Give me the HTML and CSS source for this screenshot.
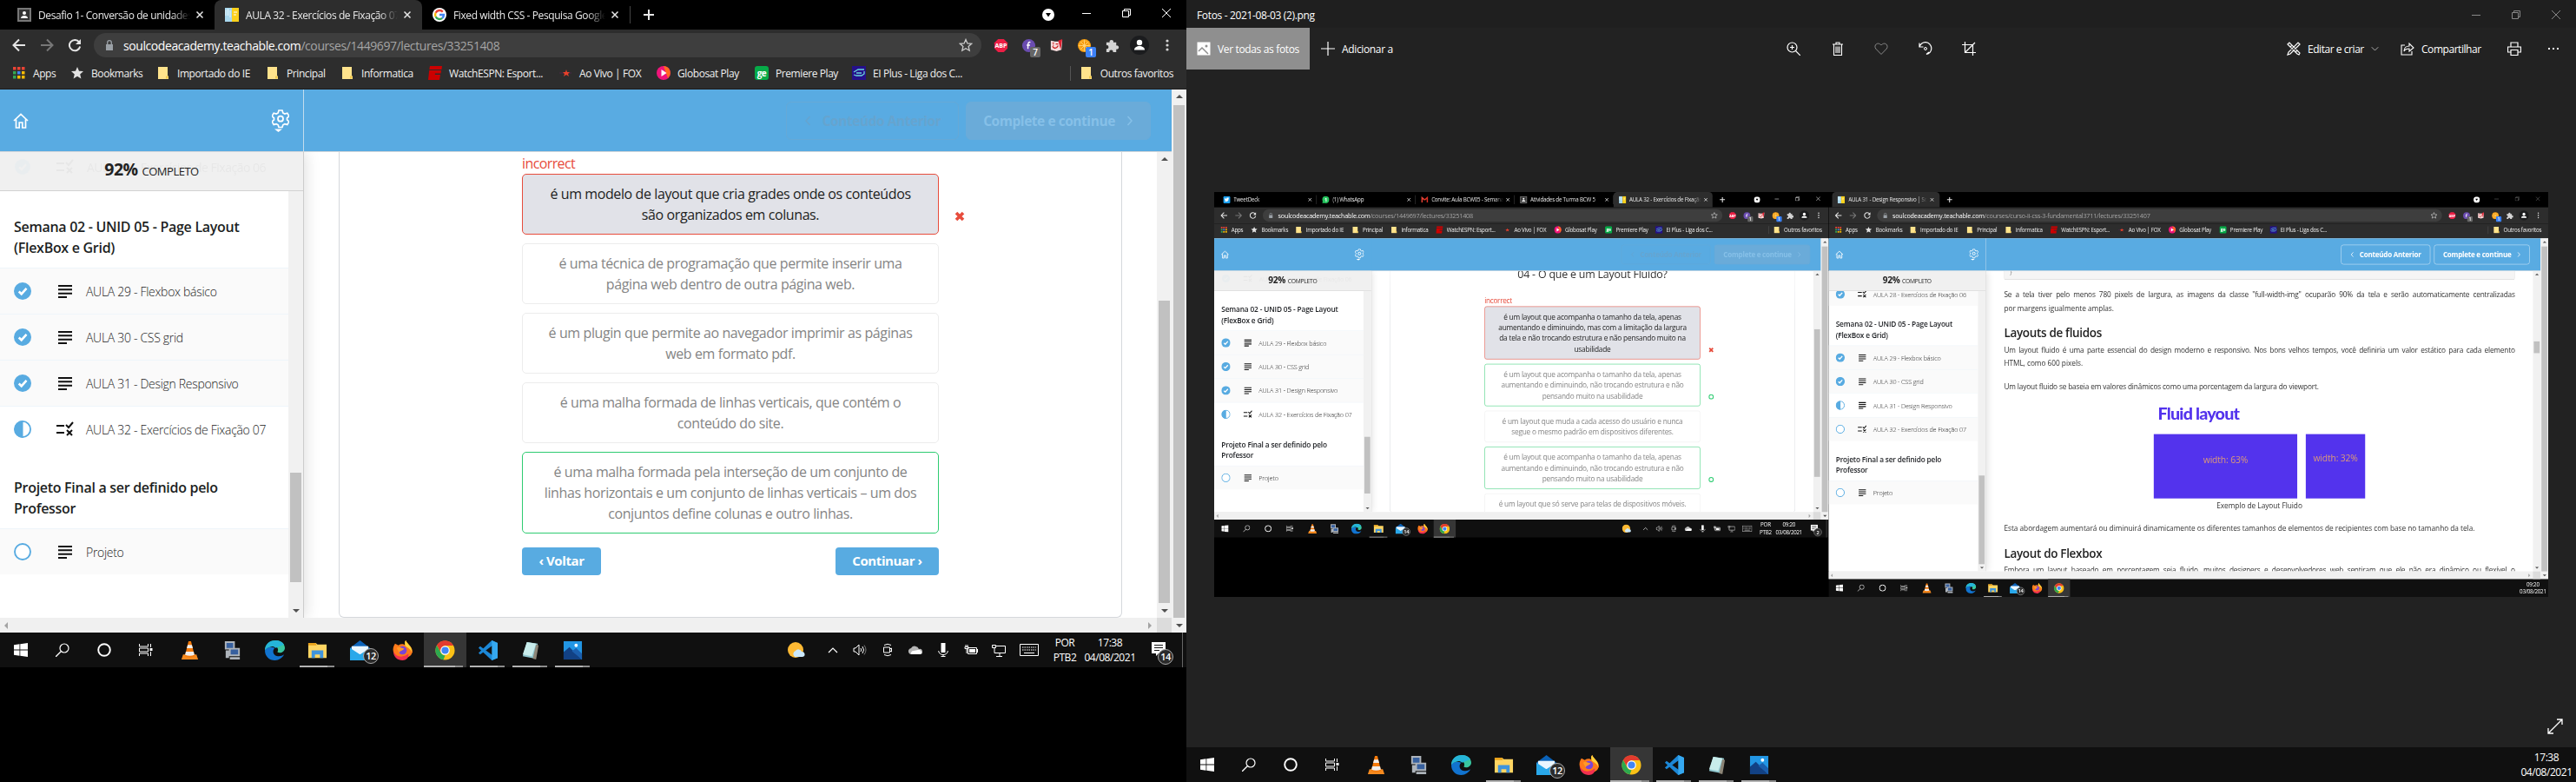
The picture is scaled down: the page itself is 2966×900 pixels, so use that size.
FILE: index.html
```html
<!DOCTYPE html>
<html lang="pt-BR">
<head>
<meta charset="utf-8">
<title>AULA 32 - Exercícios de Fixação 07</title>
<link rel="stylesheet" href="styles.css">
</head>
<body>
<svg class="defs" aria-hidden="true">
  <symbol id="x" viewBox="0 0 10 10"><path d="M1.5 1.5l7 7M8.5 1.5l-7 7" stroke="currentColor" stroke-width="1.5"/></symbol>
  <symbol id="xt" viewBox="0 0 10 10"><path d="M0 0l10 10M10 0L0 10" stroke="currentColor"/></symbol>
  <symbol id="min" viewBox="0 0 10 10"><path d="M0 5.5h10" stroke="currentColor"/></symbol>
  <symbol id="rest" viewBox="0 0 10 10"><path d="M.5 2.5h7v7h-7zM2.5 2.5v-2h7v7h-2" fill="none" stroke="currentColor"/></symbol>
  <symbol id="plus" viewBox="0 0 12 12"><path d="M6 0v12M0 6h12" stroke="currentColor" stroke-width="2"/></symbol>
  <symbol id="plust" viewBox="0 0 16 16"><path d="M8 0v16M0 8h16" stroke="currentColor" stroke-width="1.2"/></symbol>
  <symbol id="drop" viewBox="0 0 14 14"><circle cx="7" cy="7" r="7" fill="#fff"/><path d="M4 5h6L7 9.500z" fill="#000"/></symbol>
  <symbol id="person" viewBox="0 0 16 16"><path d="M1 1h14v14H1z" fill="#333" stroke="#777" stroke-width="2"/><circle cx="8" cy="6" r="2" fill="#fff"/><path d="M4 12c0-4 8-4 8 0z" fill="#fff"/></symbol>
  <symbol id="soul" viewBox="0 0 16 16"><path d="M0 0h8v16H0z" fill="#a9d8ee"/><path d="M8 0h8v16H8z" fill="#fcd11b"/><path d="M1 2v7M3.500 1v8M6 3v8" stroke="#eaf7fb"/><path d="M10 5h4M10 8h3" stroke="#fff"/></symbol>
  <symbol id="google" viewBox="0 0 16 16"><circle cx="8" cy="8" r="8" fill="#fff"/><g fill="none" stroke-width="2.400"><path d="M11.800 4.600A5 5 0 0 0 3.600 5.700" stroke="#ea4335"/><path d="M3.600 5.700a5 5 0 0 0 0 4.600" stroke="#fbbc05"/><path d="M3.600 10.300a5 5 0 0 0 7.600 1.500" stroke="#34a853"/><path d="M11.200 11.800A5 5 0 0 0 13 8H8" stroke="#4285f4"/></g></symbol>
  <symbol id="back" viewBox="0 0 16 16"><path d="M15 8H2M8 1.500L1.500 8 8 14.500" fill="none" stroke="currentColor" stroke-width="2"/></symbol>
  <symbol id="fwd" viewBox="0 0 16 16"><path d="M1 8h13M8 1.500L14.500 8 8 14.500" fill="none" stroke="currentColor" stroke-width="2"/></symbol>
  <symbol id="reload" viewBox="0 0 16 16"><path d="M13.200 4.500A6.200 6.200 0 1 0 14.200 9.500" fill="none" stroke="currentColor" stroke-width="2"/><path d="M15 1v6H9z" fill="currentColor"/></symbol>
  <symbol id="lock" viewBox="0 0 10 12"><path d="M1 5h8v7H1z" fill="#9aa0a6"/><path d="M2.700 5V3a2.300 2.300 0 0 1 4.600 0v2" fill="none" stroke="#9aa0a6" stroke-width="1.300"/></symbol>
  <symbol id="staro" viewBox="0 0 16 16"><path d="M8 1.500l1.900 4.400 4.800.4-3.600 3.200 1.100 4.700L8 11.700l-4.200 2.500 1.100-4.700L1.300 6.300l4.800-.4z" fill="none" stroke="#ccc" stroke-width="1.300"/></symbol>
  <symbol id="star" viewBox="0 0 16 16"><path d="M8 1l2 4.700 5 .4-3.800 3.300 1.200 5L8 11.700l-4.400 2.700 1.200-5L1 6.100l5-.4z" fill="#e3e3e3"/></symbol>
  <symbol id="abp" viewBox="0 0 18 18"><path d="M5.500 1h7L17 5.500v7L12.500 17h-7L1 12.500v-7z" fill="#ed1e45"/><text x="9" y="11.800" text-anchor="middle" font-size="7.500" font-weight="700" fill="#fff">ABP</text></symbol>
  <symbol id="fch" viewBox="0 0 18 18"><circle cx="9" cy="9" r="8" fill="#6a4cb0"/><path d="M11 5c-3-1-3 2-3 8M6.500 8.500h4" stroke="#fff" stroke-width="1.500" fill="none"/></symbol>
  <symbol id="cat" viewBox="0 0 18 18"><path d="M2 3l5 1 4 0 5-2-1 12-6 2-7-2z" fill="#f7dede"/><path d="M11 3l5-2-2 13" fill="#d23"/><path d="M4 6h2M8 7h3M4 10c2 3 5 3 7-1M5 8v1" stroke="#c22" stroke-width="1.400" fill="none"/></symbol>
  <symbol id="orange" viewBox="0 0 18 18"><circle cx="9" cy="9" r="8" fill="#f59a0c"/><path d="M9 2v14M2 9h14M4 4l10 10M14 4L4 14" stroke="#ffd37a"/><circle cx="9" cy="9" r="6" fill="none" stroke="#ffc24d"/></symbol>
  <symbol id="puzzle" viewBox="0 0 18 18"><path d="M2 5h4a2.300 2.300 0 1 1 4.500 0H14v4a2.300 2.300 0 1 1 0 4.300V17h-4a2.200 2.200 0 1 0-4.300 0H2v-4a2.200 2.200 0 1 0 0-4.300z" fill="#d5d5d5"/></symbol>
  <symbol id="avatar" viewBox="0 0 22 22"><circle cx="11" cy="11" r="11" fill="#1b1c1e"/><circle cx="11" cy="8" r="3.200" fill="#fff"/><path d="M5 16.500c0-6 12-6 12 0z" fill="#fff"/></symbol>
  <symbol id="dots" viewBox="0 0 4 16"><g fill="#d5d5d5"><circle cx="2" cy="3" r="1.600"/><circle cx="2" cy="8" r="1.600"/><circle cx="2" cy="13" r="1.600"/></g></symbol>
  <symbol id="apps" viewBox="0 0 16 16"><path d="M1 1h3.500v3.500H1zM6 1h3.500v3.500H6zM11 1h3.500v3.500H11z" fill="#ea4335"/><path d="M1 6h3.500v3.500H1z" fill="#34a853"/><path d="M6 6h3.500v3.500H6z" fill="#4285f4"/><path d="M11 6h3.500v3.500H11zM6 11h3.500v3.500H6zM11 11h3.500v3.500H11z" fill="#fbbc05"/><path d="M1 11h3.500v3.500H1z" fill="#34a853"/></symbol>
  <symbol id="folder" viewBox="0 0 16 16"><path d="M2 1h11v10l1 1v3H2z" fill="#ffe38c"/><path d="M11 14.500v-3h2.500v3z" fill="#f2c94c"/></symbol>
  <symbol id="espn" viewBox="0 0 16 16"><path d="M2 0h14l-.5 4H1.300zM1.200 5H15l-.5 3.500H8L7.800 10H14l-1 6H0z" fill="#c00"/></symbol>
  <symbol id="fox" viewBox="0 0 16 16"><path d="M1 7h14v2H1z" fill="#3c2a3a"/><path d="M9 4l1 3h3l-2 2 1 3-3-2-3 2 1-3-2-2h3z" fill="#e8402a"/></symbol>
  <symbol id="globo" viewBox="0 0 16 16"><circle cx="8" cy="8" r="8" fill="#f0147a"/><path d="M8 0a8 8 0 0 1 5 14z" fill="#ff6a1f"/><path d="M5.500 4v8l6-4z" fill="#fff"/></symbol>
  <symbol id="ge" viewBox="0 0 16 16"><rect width="16" height="16" rx="3" fill="#06aa48"/><text x="8" y="11.500" text-anchor="middle" font-size="10" font-weight="700" fill="#fff">ge</text></symbol>
  <symbol id="ei" viewBox="0 0 16 16"><path d="M0 0h16v16H0z" fill="#25108a"/><path d="M2 7l5-3h7M2 10l3 1h6l3-2V6M5 8h6" stroke="#67d3da" stroke-width="1.300" fill="none"/></symbol>
  <symbol id="home" viewBox="0 0 18 18"><path d="M1 9l8-7.500L17 9M3.500 7.500V17h3.700v-6h3.600v6h3.700V7.500" fill="none" stroke="#fff" stroke-width="1.700"/></symbol>
  <symbol id="gear" viewBox="0 0 20 26"><path d="M8 1h4l.8 3 2 1.100 3-.9 2 3.500-2.300 2.100v2l2.300 2.200-2 3.400-3-.8-2 1.100L12 20.500H8l-.8-2.800-2-1.100-3 .8-2-3.400 2.300-2.200v-2L.2 7.700l2-3.500 3 .9 2-1.100z" fill="none" stroke="#fff" stroke-width="1.700"/><circle cx="10" cy="10.700" r="3" fill="none" stroke="#fff" stroke-width="1.800"/><path d="M3 22.500h9L7.500 26z" fill="#fff"/></symbol>
  <symbol id="done" viewBox="0 0 20 20"><circle cx="10" cy="10" r="10" fill="#58abe1"/><path d="M5.700 10.500l3 2.800 5.800-6.500" fill="none" stroke="#fff" stroke-width="2.600"/></symbol>
  <symbol id="half" viewBox="0 0 20 20"><circle cx="10" cy="10" r="9.100" fill="#fff" stroke="#58abe1" stroke-width="1.800"/><path d="M10.500 0v20A10 10 0 0 1 10.500 0z" fill="#58abe1"/></symbol>
  <symbol id="todo" viewBox="0 0 20 20"><circle cx="10" cy="10" r="9" fill="#fff" stroke="#58abe1" stroke-width="1.900"/></symbol>
  <symbol id="lines" viewBox="0 0 20 18"><path d="M2 3h16M2 7.300h16M2 11.700h16M2 16h10" stroke="currentColor" stroke-width="2"/></symbol>
  <symbol id="quiz" viewBox="0 0 20 18"><path d="M0 5h9M0 13h9" stroke="currentColor" stroke-width="2"/><path d="M11 4l3 3 5-6M12 10l6 6M18 10l-6 6" stroke="currentColor" stroke-width="2" fill="none"/></symbol>
  <symbol id="cl" viewBox="0 0 8 12"><path d="M6.500 1L2 6l4.500 5" fill="none" stroke="currentColor" stroke-width="1.500"/></symbol>
  <symbol id="cr" viewBox="0 0 8 12"><path d="M1.500 1L6 6l-4.500 5" fill="none" stroke="currentColor" stroke-width="1.500"/></symbol>
  <symbol id="wrong" viewBox="0 0 12 12"><path d="M2 2l8 8M10 2l-8 8" stroke="#e74c3c" stroke-width="3.600"/></symbol>
  <symbol id="right" viewBox="0 0 14 14"><circle cx="7" cy="7" r="5.500" fill="none" stroke="#2ecc71" stroke-width="2.500"/></symbol>
  <symbol id="win" viewBox="0 0 16 16"><path d="M0 2.200l6.500-.9v6.300H0zM7.300 1.200L16 0v7.600H7.300zM0 8.400h6.500v6.300L0 13.800zM7.300 8.400H16V16l-8.700-1.200z" fill="#fff"/></symbol>
  <symbol id="search" viewBox="0 0 16 16"><circle cx="10" cy="6" r="5" fill="none" stroke="#fff" stroke-width="1.200"/><path d="M6.500 9.500L0 16" stroke="#fff" stroke-width="1.300"/></symbol>
  <symbol id="cort" viewBox="0 0 16 16"><circle cx="8" cy="8" r="6.800" fill="none" stroke="#fff" stroke-width="1.900"/></symbol>
  <symbol id="task" viewBox="0 0 16 16"><path d="M.5 1v3h10V1M.5 15v-3h10v3M.5 6h10v4H.5zM13.500 1v4M13.500 10v5" fill="none" stroke="#fff"/><path d="M12.500 6h3v3h-3z" fill="#fff"/></symbol>
  <symbol id="vlc" viewBox="0 0 24 24"><path d="M4 17h16l2 6H2z" fill="#f58a1f"/><path d="M10.500 1h3L18 19q-6 3-12 0z" fill="#f47a0b"/><path d="M9.500 5.500h5l1.200 4H8.400zM7.300 13.500h9.400l.9 4q-5.600 2-11.200 0z" fill="#eee"/></symbol>
  <symbol id="pc" viewBox="0 0 24 24"><path d="M3 1h12v10H3zM8 9h13v10H8zM4 12h4v9H4zM9 20h12v3H9z" fill="#aeb4bb"/><path d="M5 3h8v6H5zM10 11h9v6h-9z" fill="#37609f"/></symbol>
  <symbol id="edge" viewBox="0 0 24 24"><path d="M0 12C1 3 8 0 13 0c7 0 11 5 11 9 0 5-6 7-9 5 2-3 0-7-4-7-5 0-9 3-11 5z" fill="#38c6a0"/><path d="M13 0C5 0 0 5 0 12c3-5 10-6 13-3l10-4c-2-3-6-5-10-5z" fill="#25b5d8"/><path d="M0 12c0 7 5 12 12 12 5 0 9-3 11-7-4 3-12 3-13-3-.3-3 1-4 2-5C7 7 2 8 0 12z" fill="#1173cf"/></symbol>
  <symbol id="expl" viewBox="0 0 24 24"><path d="M1 3h9l2 2h11v16H1z" fill="#ffd562"/><path d="M1 3h9l1 3H1z" fill="#e9a21b"/><path d="M5 12h14v9h-4v-4H9v4H5z" fill="#3f94dc"/></symbol>
  <symbol id="mail" viewBox="0 0 24 24"><path d="M0 9l12-9 12 9v14H0z" fill="#0b62b8"/><path d="M2 7h20v10H2z" fill="#eaf6ff"/><path d="M0 9l12 8 12-8v15H0z" fill="#29a8ea"/></symbol>
  <symbol id="ff" viewBox="0 0 24 24"><path d="M3 4l4 2c3-2 6-2 8 0 0-3-1-4 1-6 1 4 8 7 8 14a12 11 0 0 1-23 0C0 10 1 7 3 4z" fill="#ff7a1a"/><path d="M1 13c3 8 12 8 18 3 1 5-3 8-7 8C6 24 1 20 1 13z" fill="#f2304f"/><path d="M16 0c1 4 8 7 7 14-2-5-6-5-8-8 0-3-1-4 1-6z" fill="#ffd43a"/><circle cx="12" cy="12" r="5" fill="#7a45d8"/><path d="M5 9c3-2 5 0 9 1-2 3-5 2-6 5z" fill="#ff9a26"/></symbol>
  <symbol id="chr" viewBox="0 0 24 24"><circle cx="12" cy="12" r="11.500" fill="#fbc116"/><path d="M2 6a11.500 11.500 0 0 1 20 .3H12a6 6 0 0 0-5 8z" fill="#e33b2e"/><path d="M2 6l5 9c1 2 3 3 5 3l-2 5.300A11.500 11.500 0 0 1 2 6z" fill="#2da94f"/><circle cx="12" cy="12" r="5.500" fill="#fff"/><circle cx="12" cy="12" r="4.300" fill="#4285f4"/></symbol>
  <symbol id="vsc" viewBox="0 0 24 24"><path d="M17 0l7 3v18l-7 3L1 9l2-2 15 11V6L3 17l-2-2z" fill="#1c87d6"/><path d="M17 0l7 3v18l-7 3z" fill="#35a8f0"/></symbol>
  <symbol id="note" viewBox="0 0 24 24"><path d="M8 2l13 2-3 18-15-3z" fill="#8fc7cf"/><path d="M8 2l11 2-5 15-11-2z" fill="#c8eceb"/><path d="M19 5l3 1-3 17-4-1z" fill="#8c8577"/></symbol>
  <symbol id="pho" viewBox="0 0 24 24"><path d="M1 1h22v22H1z" fill="#2296e4"/><path d="M1 14l7-6 15 15H1z" fill="#124184"/><path d="M11 13l5-4 7 7v7z" fill="#1b5fae"/><circle cx="16" cy="6" r="2" fill="#fff"/></symbol>
  <symbol id="sun" viewBox="0 0 20 20"><circle cx="9" cy="10" r="9" fill="#fdb933"/><path d="M8 18a4 4 0 0 1 1-7 4 4 0 0 1 7 1 3 3 0 0 1 1 6z" fill="#cbe8fb"/></symbol>
  <symbol id="up" viewBox="0 0 12 12"><path d="M1 9l5-5 5 5" fill="none" stroke="#fff" stroke-width="1.200"/></symbol>
  <symbol id="vol" viewBox="0 0 16 16"><path d="M1 6h2l4-4v12L3 10H1z" fill="none" stroke="#fff"/><path d="M9 6q1.500 2 0 4M11 4q3 4 0 8" fill="none" stroke="#fff"/><path d="M13 2.500q4 5.500 0 11" fill="none" stroke="#777"/></symbol>
  <symbol id="cam" viewBox="0 0 16 16"><path d="M4 2.500q4-2.500 8 0M4 13.500q4 2.500 8 0M3.500 5h7v6h-7zM10.500 7l2-1v4l-2-1" fill="none" stroke="#fff"/></symbol>
  <symbol id="cloud" viewBox="0 0 16 16"><path d="M1 12a3.500 3.500 0 0 1 2-6 5 5 0 0 1 9 1 3 3 0 0 1 2 6H2z" fill="#b5b5b5"/><path d="M3 13a3 3 0 0 1 3-4l5-1a3 3 0 0 1 3 5z" fill="#fff"/></symbol>
  <symbol id="mic" viewBox="0 0 12 16"><path d="M3.500 0h5v11h-5z" fill="#fff"/><path d="M.7 9c0 6 10.600 6 10.600 0M6 13v3M3.500 15.500h5" fill="none" stroke="#fff"/></symbol>
  <symbol id="bat" viewBox="0 0 16 16"><path d="M4.500 5.500h10v7h-10zM15.500 7v4M2 2v3M4 2v3M1 4.500h4v2H1zM3 6v6" fill="none" stroke="#fff"/><path d="M6 7h7v4H6z" fill="#fff"/></symbol>
  <symbol id="net" viewBox="0 0 16 16"><path d="M5 3.500h10.500v8H3V5M9 12v3M5 15.500h7M.5 2.500h4v3h-4z" fill="none" stroke="#fff"/></symbol>
  <symbol id="kbd" viewBox="0 0 22 14"><path d="M.5.5h21v13H.5z" fill="none" stroke="#fff"/><path d="M3 4h16M3 7h16" stroke="#fff" stroke-dasharray="1.500 1"/><path d="M5 10.500h12" stroke="#fff"/></symbol>
  <symbol id="msg" viewBox="0 0 16 16"><path d="M0 0h16v13H8l-3 3v-3H0z" fill="#fff"/><path d="M3 3.500h10M3 6.500h10M3 9.500h6" stroke="#111"/></symbol>
  <symbol id="tw" viewBox="0 0 16 16"><rect width="16" height="16" rx="3" fill="#1da1f2"/><path d="M3 11c4 3 9 1 9-5l1-2-3-.5c-2-.500-3 1-2.500 2.500C6 6 4 5 3.500 4 2.500 7 4 9 5 10z" fill="#fff"/></symbol>
  <symbol id="wa" viewBox="0 0 16 16"><circle cx="8" cy="8" r="8" fill="#25c35e"/><path d="M0 16l1.500-5 4 4z" fill="#25c35e"/><text x="8" y="12" text-anchor="middle" font-size="11" font-weight="700" fill="#fff">1</text></symbol>
  <symbol id="gm" viewBox="0 0 16 16"><path d="M2 14V3.500l6 5" fill="none" stroke="#ea4335" stroke-width="3"/><path d="M14 14V3.500l-6 5" fill="none" stroke="#d93025" stroke-width="3"/></symbol>
  <symbol id="pic" viewBox="0 0 16 16"><path d="M.5.5h15v15H.5z" fill="#fff"/><path d="M2 11l4-4 7 7" stroke="#8f8f8f" stroke-width="1.500" fill="none"/><circle cx="11" cy="5" r="1.500" fill="#8f8f8f"/></symbol>
  <symbol id="zoomi" viewBox="0 0 16 16"><circle cx="6.500" cy="6.500" r="5.500" fill="none" stroke="#fff" stroke-width="1.200"/><path d="M10.500 10.500L16 16M6.500 4v5M4 6.500h5" stroke="#fff" stroke-width="1.200"/></symbol>
  <symbol id="trash" viewBox="0 0 16 16"><path d="M2 3h12M6 3V1h4v2M3.500 3v12.500h9V3M6 5.500v7.500M8 5.500v7.500M10 5.500v7.500" fill="none" stroke="#fff" stroke-width="1.100"/></symbol>
  <symbol id="heart" viewBox="0 0 16 16"><path d="M8 14.500L1.700 8C-1 4 4-.500 8 4c4-4.500 9 0 6.300 4z" fill="none" stroke="#888"/></symbol>
  <symbol id="rot" viewBox="0 0 16 16"><path d="M1 6a7 7 0 1 1 8 8.500M1 1.500V6h4.500M12 12l-3 2.500" fill="none" stroke="#fff" stroke-width="1.200"/><circle cx="8" cy="8" r="1.500" fill="none" stroke="#fff"/></symbol>
  <symbol id="crop" viewBox="0 0 16 16"><path d="M3.500 0v12.500H16M0 3.500h12.500V16M4 12L15 1" fill="none" stroke="#fff" stroke-width="1.200"/></symbol>
  <symbol id="edit" viewBox="0 0 16 16"><path d="M1 3l2-2 12 12-1 2-2-1zM15 3l-2-2L2 12l-1 3 3-1zM4 6l2-2M10 12l2-2" fill="none" stroke="#fff" stroke-width="1.200"/></symbol>
  <symbol id="share" viewBox="0 0 16 16"><path d="M5 4H1v11h12v-4M4 11c0-4 3-6 6-6V2l5 5-5 4V8c-3 0-5 1-6 3z" fill="none" stroke="#fff" stroke-width="1.100"/></symbol>
  <symbol id="print" viewBox="0 0 16 16"><path d="M4 6V1h8v5M4 12H.5V6h15v6H12M4 9.500h8v6H4z" fill="none" stroke="#fff" stroke-width="1.200"/></symbol>
  <symbol id="expand" viewBox="0 0 18 18"><path d="M1 17L17 1M11 1h6v6M1 11v6h6" fill="none" stroke="#fff" stroke-width="1.300"/></symbol>
</svg>

<main class="desk">
  <section class="mon left">
    <div class="tabs">
      <div class="tab first"><svg><use href="#person"/></svg><span>Desafio 1- Conversão de unidades</span><svg class="tx"><use href="#x"/></svg></div>
      <div class="tab on"><svg><use href="#soul"/></svg><span>AULA 32 - Exercícios de Fixação 07</span><svg class="tx"><use href="#x"/></svg></div>
      <div class="tab sep"><svg><use href="#google"/></svg><span>Fixed width CSS - Pesquisa Google</span><svg class="tx"><use href="#x"/></svg></div>
      <svg class="new"><use href="#plus"/></svg>
      <div class="wc"><svg class="dd"><use href="#drop"/></svg><svg><use href="#min"/></svg><svg><use href="#rest"/></svg><svg><use href="#xt"/></svg></div>
    </div>
    <div class="bar">
      <svg><use href="#back"/></svg><svg class="dim"><use href="#fwd"/></svg><svg><use href="#reload"/></svg>
      <div class="omni"><svg class="lk"><use href="#lock"/></svg><span class="url"><b>soulcodeacademy.teachable.com</b>/courses/1449697/lectures/33251408</span><svg><use href="#staro"/></svg></div>
      <div class="ext"><i><svg><use href="#abp"/></svg></i><i><svg><use href="#fch"/></svg><em>7</em></i><i><svg><use href="#cat"/></svg></i><i><svg><use href="#orange"/></svg><em class="bl">1</em></i><i><svg><use href="#puzzle"/></svg></i><i><svg class="av"><use href="#avatar"/></svg></i><i><svg class="dt"><use href="#dots"/></svg></i></div>
    </div>
    <div class="marks"><p><svg><use href="#apps"/></svg>Apps</p><p><svg><use href="#star"/></svg>Bookmarks</p><p><svg><use href="#folder"/></svg>Importado do IE</p><p><svg><use href="#folder"/></svg>Principal</p><p><svg><use href="#folder"/></svg>Informatica</p><p><svg><use href="#espn"/></svg>WatchESPN: Esport...</p><p><svg><use href="#fox"/></svg>Ao Vivo | FOX</p><p><svg><use href="#globo"/></svg>Globosat Play</p><p><svg><use href="#ge"/></svg>Premiere Play</p><p><svg><use href="#ei"/></svg>EI Plus - Liga dos C...</p><p class="oth"><svg><use href="#folder"/></svg>Outros favoritos</p></div>
    <div class="page">
      <div class="view">
        <header class="top"><div class="tl"><svg class="hm"><use href="#home"/></svg><svg class="gr"><use href="#gear"/></svg></div><div class="tr off"><span class="b1"><svg><use href="#cl"/></svg>Conteúdo Anterior</span><span class="b2">Complete e continue<svg><use href="#cr"/></svg></span></div></header>
        <div class="cols">
          <aside class="side">
            <div class="prog"><div class="ghost"><svg><use href="#done"/></svg><svg><use href="#quiz"/></svg>AULA 28 - Exercícios de Fixação 06</div><span><b>92%</b> COMPLETO</span></div>
            <div class="sb"><div class="list">
              <h3>Semana 02 - UNID 05 - Page Layout (FlexBox e Grid)</h3>
              <div class="row"><svg class="st"><use href="#done"/></svg><svg class="ty"><use href="#lines"/></svg>AULA 29 - Flexbox básico</div>
              <div class="row"><svg class="st"><use href="#done"/></svg><svg class="ty"><use href="#lines"/></svg>AULA 30 - CSS grid</div>
              <div class="row"><svg class="st"><use href="#done"/></svg><svg class="ty"><use href="#lines"/></svg>AULA 31 - Design Responsivo</div>
              <div class="row cur"><svg class="st"><use href="#half"/></svg><svg class="ty"><use href="#quiz"/></svg>AULA 32 - Exercícios de Fixação 07</div>
              <h3>Projeto Final a ser definido pelo Professor</h3>
              <div class="row"><svg class="st"><use href="#todo"/></svg><svg class="ty"><use href="#lines"/></svg>Projeto</div>
            </div><div class="scr s-side"><i></i></div></div>
          </aside>
          <div class="body"><div class="card q-main"><div class="quiz">
            <div class="inc">incorrect</div>
            <div class="opt bad">é um modelo de layout que cria grades onde os conteúdos<br>são organizados em colunas.<svg><use href="#wrong"/></svg></div>
            <div class="opt">é uma técnica de programação que permite inserir uma<br>página web dentro de outra página web.</div>
            <div class="opt">é um plugin que permite ao navegador imprimir as páginas<br>web em formato pdf.</div>
            <div class="opt">é uma malha formada de linhas verticais, que contém o<br>conteúdo do site.</div>
            <div class="opt ok">é uma malha formada pela interseção de um conjunto de<br>linhas horizontais e um conjunto de linhas verticais – um dos<br>conjuntos define colunas e outro linhas.</div>
            <div class="nav"><span>‹ Voltar</span><span>Continuar ›</span></div>
          </div></div></div>
          <div class="scr s-q"><i></i></div>
        </div>
        <div class="hs"><i></i></div>
      </div>
      <div class="scr s-page"><i></i></div>
    </div>
    <div class="tbar">
      <i class="n"><svg class="s16"><use href="#win"/></svg></i><i class="n"><svg class="s16"><use href="#search"/></svg></i><i class="n"><svg class="s16"><use href="#cort"/></svg></i><i class="n"><svg class="s16"><use href="#task"/></svg></i><i class="g"></i><i><svg><use href="#vlc"/></svg></i><i><svg><use href="#pc"/></svg></i><i><svg><use href="#edge"/></svg></i><i class="run"><svg><use href="#expl"/></svg></i><i><svg><use href="#mail"/></svg><em>12</em></i><i><svg><use href="#ff"/></svg></i><i class="act"><svg><use href="#chr"/></svg></i><i class="run"><svg><use href="#vsc"/></svg></i><i class="run"><svg><use href="#note"/></svg></i><i class="run"><svg><use href="#pho"/></svg></i>
      <div class="tray"><svg class="s20"><use href="#sun"/></svg><svg class="s12"><use href="#up"/></svg><svg><use href="#vol"/></svg><svg><use href="#cam"/></svg><svg><use href="#cloud"/></svg><svg><use href="#mic"/></svg><svg><use href="#bat"/></svg><svg><use href="#net"/></svg><svg class="kb"><use href="#kbd"/></svg><span class="lang">POR<br>PTB2</span><span class="clk">17:38<br>04/08/2021</span><i class="nt"><svg><use href="#msg"/></svg><em>14</em></i></div>
    </div>
  </section>

  <section class="mon right app">
    <div class="atitle"><span>Fotos - 2021-08-03 (2).png</span><div class="awc"><svg><use href="#min"/></svg><svg><use href="#rest"/></svg><svg><use href="#xt"/></svg></div></div>
    <div class="atool">
      <span class="all"><svg><use href="#pic"/></svg>Ver todas as fotos</span><span class="add"><svg><use href="#plust"/></svg>Adicionar a</span>
      <div class="mid"><svg><use href="#zoomi"/></svg><svg><use href="#trash"/></svg><svg><use href="#heart"/></svg><svg><use href="#rot"/></svg><svg><use href="#crop"/></svg></div>
      <div class="end"><span class="e1"><svg><use href="#edit"/></svg>Editar e criar<svg class="dn"><use href="#up"/></svg></span><span class="e2"><svg><use href="#share"/></svg>Compartilhar</span><svg><use href="#print"/></svg><span class="more"><b></b><b></b><b></b></span></div>
    </div>
    <div class="stage">
      <div class="photo"><div class="desk shrink">
        <section class="mon left">
          <div class="tabs t5">
            <div class="tab first"><svg><use href="#tw"/></svg><span>TweetDeck</span><svg class="tx"><use href="#x"/></svg></div>
            <div class="tab"><svg><use href="#wa"/></svg><span>(1) WhatsApp</span><svg class="tx"><use href="#x"/></svg></div>
            <div class="tab"><svg><use href="#gm"/></svg><span>Convite: Aula BCW05 - Semana 02</span><svg class="tx"><use href="#x"/></svg></div>
            <div class="tab"><svg><use href="#person"/></svg><span>Atividades de Turma BCW 5</span><svg class="tx"><use href="#x"/></svg></div>
            <div class="tab on"><svg><use href="#soul"/></svg><span>AULA 32 - Exercícios de Fixação</span><svg class="tx"><use href="#x"/></svg></div>
            <svg class="new"><use href="#plus"/></svg>
            <div class="wc"><svg class="dd"><use href="#drop"/></svg><svg><use href="#min"/></svg><svg><use href="#rest"/></svg><svg><use href="#xt"/></svg></div>
          </div>
          <div class="bar">
            <svg><use href="#back"/></svg><svg class="dim"><use href="#fwd"/></svg><svg><use href="#reload"/></svg>
            <div class="omni"><svg class="lk"><use href="#lock"/></svg><span class="url"><b>soulcodeacademy.teachable.com</b>/courses/1449697/lectures/33251408</span><svg><use href="#staro"/></svg></div>
            <div class="ext"><i><svg><use href="#abp"/></svg></i><i><svg><use href="#fch"/></svg><em>1</em></i><i><svg><use href="#cat"/></svg></i><i><svg><use href="#orange"/></svg><em class="bl">1</em></i><i><svg><use href="#puzzle"/></svg></i><i><svg class="av"><use href="#avatar"/></svg></i><i><svg class="dt"><use href="#dots"/></svg></i></div>
          </div>
          <div class="marks"><p><svg><use href="#apps"/></svg>Apps</p><p><svg><use href="#star"/></svg>Bookmarks</p><p><svg><use href="#folder"/></svg>Importado do IE</p><p><svg><use href="#folder"/></svg>Principal</p><p><svg><use href="#folder"/></svg>Informatica</p><p><svg><use href="#espn"/></svg>WatchESPN: Esport...</p><p><svg><use href="#fox"/></svg>Ao Vivo | FOX</p><p><svg><use href="#globo"/></svg>Globosat Play</p><p><svg><use href="#ge"/></svg>Premiere Play</p><p><svg><use href="#ei"/></svg>EI Plus - Liga dos C...</p><p class="oth"><svg><use href="#folder"/></svg>Outros favoritos</p></div>
          <div class="page">
            <div class="view">
              <header class="top"><div class="tl nl"><svg class="hm"><use href="#home"/></svg><svg class="gr"><use href="#gear"/></svg></div><div class="tr off"><span class="b1"><svg><use href="#cl"/></svg>Conteúdo Anterior</span><span class="b2">Complete e continue<svg><use href="#cr"/></svg></span></div></header>
              <div class="cols">
                <aside class="side">
                  <div class="prog"><div class="ghost"><svg><use href="#done"/></svg><svg><use href="#quiz"/></svg>AULA 28 - Exercícios de Fixação 06</div><span><b>92%</b> COMPLETO</span></div>
                  <div class="sb"><div class="list">
                    <h3>Semana 02 - UNID 05 - Page Layout (FlexBox e Grid)</h3>
                    <div class="row"><svg class="st"><use href="#done"/></svg><svg class="ty"><use href="#lines"/></svg>AULA 29 - Flexbox básico</div>
                    <div class="row"><svg class="st"><use href="#done"/></svg><svg class="ty"><use href="#lines"/></svg>AULA 30 - CSS grid</div>
                    <div class="row"><svg class="st"><use href="#done"/></svg><svg class="ty"><use href="#lines"/></svg>AULA 31 - Design Responsivo</div>
                    <div class="row cur"><svg class="st"><use href="#half"/></svg><svg class="ty"><use href="#quiz"/></svg>AULA 32 - Exercícios de Fixação 07</div>
                    <h3>Projeto Final a ser definido pelo Professor</h3>
                    <div class="row"><svg class="st"><use href="#todo"/></svg><svg class="ty"><use href="#lines"/></svg>Projeto</div>
                  </div><div class="scr s-side"><i></i></div></div>
                </aside>
                <div class="body"><div class="card q-in"><h2 class="qt">04 - O que é um Layout Fluido?</h2><div class="quiz">
                  <div class="inc">incorrect</div>
                  <div class="opt bad">é um layout que acompanha o tamanho da tela, apenas<br>aumentando e diminuindo, mas com a limitação da largura<br>da tela e não trocando estrutura e não pensando muito na<br>usabilidade<svg><use href="#wrong"/></svg></div>
                  <div class="opt ok">é um layout que acompanha o tamanho da tela, apenas<br>aumentando e diminuindo, não trocando estrutura e não<br>pensando muito na usabilidade<svg><use href="#right"/></svg></div>
                  <div class="opt">é um layout que muda a cada acesso do usuário e nunca<br>segue o mesmo padrão em dispositivos diferentes.</div>
                  <div class="opt ok">é um layout que acompanha o tamanho da tela, apenas<br>aumentando e diminuindo, não trocando estrutura e não<br>pensando muito na usabilidade<svg><use href="#right"/></svg></div>
                  <div class="opt">é um layout que só serve para telas de dispositivos móveis.</div>
                </div></div></div>
                <div class="scr s-q2"><i></i></div>
              </div>
              <div class="hs"><i></i></div>
            </div>
            <div class="scr s-page"><i></i></div>
          </div>
          <div class="tbar">
            <i class="n"><svg class="s16"><use href="#win"/></svg></i><i class="n"><svg class="s16"><use href="#search"/></svg></i><i class="n"><svg class="s16"><use href="#cort"/></svg></i><i class="n"><svg class="s16"><use href="#task"/></svg></i><i class="g"></i><i><svg><use href="#vlc"/></svg></i><i><svg><use href="#pc"/></svg></i><i><svg><use href="#edge"/></svg></i><i class="run"><svg><use href="#expl"/></svg></i><i><svg><use href="#mail"/></svg><em>14</em></i><i><svg><use href="#ff"/></svg></i><i class="act"><svg><use href="#chr"/></svg></i>
            <div class="tray"><svg class="s20"><use href="#sun"/></svg><svg class="s12"><use href="#up"/></svg><svg><use href="#vol"/></svg><svg><use href="#cam"/></svg><svg><use href="#cloud"/></svg><svg><use href="#mic"/></svg><svg><use href="#bat"/></svg><svg><use href="#net"/></svg><svg class="kb"><use href="#kbd"/></svg><span class="lang">POR<br>PTB2</span><span class="clk">09:20<br>03/08/2021</span><i class="nt"><svg><use href="#msg"/></svg><em>2</em></i></div>
          </div>
        </section>
        <section class="mon right">
          <div class="tabs">
            <div class="tab first on"><svg><use href="#soul"/></svg><span>AULA 31 - Design Responsivo | Soul</span><svg class="tx"><use href="#x"/></svg></div>
            <svg class="new"><use href="#plus"/></svg>
            <div class="wc faded"><svg class="dd"><use href="#drop"/></svg><svg><use href="#min"/></svg><svg><use href="#rest"/></svg><svg><use href="#xt"/></svg></div>
          </div>
          <div class="bar">
            <svg><use href="#back"/></svg><svg class="dim"><use href="#fwd"/></svg><svg><use href="#reload"/></svg>
            <div class="omni"><svg class="lk"><use href="#lock"/></svg><span class="url"><b>soulcodeacademy.teachable.com</b>/courses/curso-ii-css-3-fundamental3711/lectures/33251407</span><svg><use href="#staro"/></svg></div>
            <div class="ext"><i><svg><use href="#abp"/></svg></i><i><svg><use href="#fch"/></svg><em>1</em></i><i><svg><use href="#cat"/></svg></i><i><svg><use href="#orange"/></svg><em class="bl">1</em></i><i><svg><use href="#puzzle"/></svg></i><i><svg class="av"><use href="#avatar"/></svg></i><i><svg class="dt"><use href="#dots"/></svg></i></div>
          </div>
          <div class="marks"><p><svg><use href="#apps"/></svg>Apps</p><p><svg><use href="#star"/></svg>Bookmarks</p><p><svg><use href="#folder"/></svg>Importado do IE</p><p><svg><use href="#folder"/></svg>Principal</p><p><svg><use href="#folder"/></svg>Informatica</p><p><svg><use href="#espn"/></svg>WatchESPN: Esport...</p><p><svg><use href="#fox"/></svg>Ao Vivo | FOX</p><p><svg><use href="#globo"/></svg>Globosat Play</p><p><svg><use href="#ge"/></svg>Premiere Play</p><p><svg><use href="#ei"/></svg>EI Plus - Liga dos C...</p><p class="oth"><svg><use href="#folder"/></svg>Outros favoritos</p></div>
          <div class="page">
            <div class="view">
              <header class="top"><div class="tl"><svg class="hm"><use href="#home"/></svg><svg class="gr"><use href="#gear"/></svg></div><div class="tr"><span class="b1"><svg><use href="#cl"/></svg>Conteúdo Anterior</span><span class="b2">Complete e continue<svg><use href="#cr"/></svg></span></div></header>
              <div class="cols">
                <aside class="side">
                  <div class="prog"><span><b>92%</b> COMPLETO</span></div>
                  <div class="sb"><div class="list up">
                    <div class="row"><svg class="st"><use href="#done"/></svg><svg class="ty"><use href="#quiz"/></svg>AULA 28 - Exercícios de Fixação 06</div>
                    <h3>Semana 02 - UNID 05 - Page Layout (FlexBox e Grid)</h3>
                    <div class="row"><svg class="st"><use href="#done"/></svg><svg class="ty"><use href="#lines"/></svg>AULA 29 - Flexbox básico</div>
                    <div class="row"><svg class="st"><use href="#done"/></svg><svg class="ty"><use href="#lines"/></svg>AULA 30 - CSS grid</div>
                    <div class="row cur"><svg class="st"><use href="#half"/></svg><svg class="ty"><use href="#lines"/></svg>AULA 31 - Design Responsivo</div>
                    <div class="row"><svg class="st"><use href="#todo"/></svg><svg class="ty"><use href="#quiz"/></svg>AULA 32 - Exercícios de Fixação 07</div>
                    <h3>Projeto Final a ser definido pelo Professor</h3>
                    <div class="row"><svg class="st"><use href="#todo"/></svg><svg class="ty"><use href="#lines"/></svg>Projeto</div>
                  </div><div class="scr s-side2"><i></i></div></div>
                </aside>
                <article class="art">
                  <div class="code">}</div>
                  <p class="just">Se a tela tiver pelo menos 780 pixels de largura, as imagens da classe "full-width-img" ocuparão 90% da tela e serão automaticamente centralizadas</p><p>por margens igualmente amplas.</p>
                  <h2>Layouts de fluidos</h2>
                  <p class="just">Um layout fluido é uma parte essencial do design moderno e responsivo. Nos bons velhos tempos, você definiria um valor estático para cada elemento</p><p>HTML, como 600 pixels.</p>
                  <p class="gap">Um layout fluido se baseia em valores dinâmicos como uma porcentagem da largura do viewport.</p>
                  <figure><strong>Fluid layout</strong><div class="fl"><div>width: 63%</div><div>width: 32%</div></div><figcaption>Exemplo de Layout Fluido</figcaption></figure>
                  <p>Esta abordagem aumentará ou diminuirá dinamicamente os diferentes tamanhos de elementos de recipientes com base no tamanho da tela.</p>
                  <h2 class="h2b">Layout do Flexbox</h2>
                  <p class="just">Embora um layout baseado em porcentagem seja fluido, muitos designers e desenvolvedores web sentiram que ele não era dinâmico ou flexível o</p>
                </article>
                <div class="scr s-art"><i></i></div>
              </div>
              <div class="hs"><i></i></div>
            </div>
            <div class="scr s-page"><i></i></div>
          </div>
          <div class="tbar">
            <i class="n"><svg class="s16"><use href="#win"/></svg></i><i class="n"><svg class="s16"><use href="#search"/></svg></i><i class="n"><svg class="s16"><use href="#cort"/></svg></i><i class="n"><svg class="s16"><use href="#task"/></svg></i><i class="g"></i><i><svg><use href="#vlc"/></svg></i><i><svg><use href="#pc"/></svg></i><i><svg><use href="#edge"/></svg></i><i class="run"><svg><use href="#expl"/></svg></i><i><svg><use href="#mail"/></svg><em>14</em></i><i><svg><use href="#ff"/></svg></i><i class="act"><svg><use href="#chr"/></svg></i>
            <div class="tray solo"><span class="clk">09:20<br>03/08/2021</span></div>
          </div>
        </section>
      </div></div>
      <svg class="exp"><use href="#expand"/></svg>
    </div>
    <div class="tbar">
      <i class="n"><svg class="s16"><use href="#win"/></svg></i><i class="n"><svg class="s16"><use href="#search"/></svg></i><i class="n"><svg class="s16"><use href="#cort"/></svg></i><i class="n"><svg class="s16"><use href="#task"/></svg></i><i class="g"></i><i><svg><use href="#vlc"/></svg></i><i><svg><use href="#pc"/></svg></i><i><svg><use href="#edge"/></svg></i><i class="run"><svg><use href="#expl"/></svg></i><i><svg><use href="#mail"/></svg><em>12</em></i><i><svg><use href="#ff"/></svg></i><i class="act"><svg><use href="#chr"/></svg></i><i class="run"><svg><use href="#vsc"/></svg></i><i class="run"><svg><use href="#note"/></svg></i><i class="run"><svg><use href="#pho"/></svg></i>
      <div class="tray solo"><span class="clk">17:38<br>04/08/2021</span></div>
    </div>
  </section>
</main>
</body>
</html>
```
FILE: styles.css
```css
* { box-sizing: border-box; }
body { margin: 0; background: #000; font-family: "Open Sans", "Noto Sans", sans-serif; overflow: hidden; }
p, h2, h3, figure { margin: 0; }
i, em { font-style: normal; }
svg { display: block; flex: none; overflow: visible; }
.defs { position: absolute; width: 0; height: 0; }
.desk { display: flex; width: 2966px; height: 900px; background: #000; }
.mon { display: flex; flex-direction: column; flex: none; overflow: hidden; }
.left { width: 1366px; height: 768px; }
.right { width: 1600px; height: 900px; }

/* tab strip */
.tabs { display: flex; height: 34px; flex: none; background: #000; color: #e8e8e8; font-size: 12px; letter-spacing: -.4px; align-items: center; padding-left: 8px; }
.tab { width: 239px; height: 34px; padding: 0 12px; display: flex; align-items: center; flex: none; border-radius: 8px 8px 0 0; }
.tab svg { width: 16px; height: 16px; }
.tab span { width: 177px; margin: 0 6px 0 8px; overflow: hidden; white-space: nowrap; -webkit-mask-image: linear-gradient(90deg, #000 88%, transparent); mask-image: linear-gradient(90deg, #000 88%, transparent); }
.tab svg.tx { width: 10px; height: 10px; }
.tab.on { background: #2d2d2d; }
.tab.sep { box-shadow: 1px 0 0 #444; height: 20px; border-radius: 0; }
.t5 .tab { width: 220px; padding: 0 0 0 12px; height: 20px; border-radius: 0; border-right: 1px solid #444; }
.t5 .tab.on { height: 34px; border: 0; border-radius: 8px 8px 0 0; }
.t5 .tab span { width: 160px; margin: 0 5px 0 7px; }
.new { width: 12px; height: 12px; margin-left: 16px; }
.wc { margin-left: auto; display: flex; align-items: center; gap: 36px; padding-right: 18px; color: #fff; }
.wc svg { width: 10px; height: 10px; margin-top: -5px; }
.wc svg.dd { width: 14px; height: 14px; margin: 0 -4px 0 0; }
.faded svg:not(.dd) { opacity: .45; }

/* address bar */
.bar { display: flex; height: 36px; flex: none; background: #2d2d2d; align-items: center; padding-left: 14px; color: #e6e6e6; }
.bar > svg { width: 16px; height: 16px; margin-right: 16px; }
.bar > svg.dim { color: #777; }
.omni { flex: 1; height: 28px; margin-left: -2px; border-radius: 14px; background: #3e3e3e; display: flex; align-items: center; padding: 0 10px 0 13px; }
.omni svg { width: 16px; height: 16px; }
.omni svg.lk { width: 10px; height: 12px; }
.url { flex: 1; margin-left: 11px; font-size: 14px; letter-spacing: -.42px; color: #a5a5a5; white-space: nowrap; }
.url b { font-weight: 400; color: #fff; }
.ext { display: flex; margin: 0 6px; }
.ext i { width: 32px; height: 32px; display: flex; align-items: center; justify-content: center; position: relative; }
.ext svg { width: 17px; height: 17px; }
.ext svg.av { width: 22px; height: 22px; }
.ext svg.dt { width: 4px; height: 16px; }
.ext em { position: absolute; right: 2px; bottom: 2px; width: 12px; height: 12px; border-radius: 2px; background: #666; color: #fff; font-size: 10px; line-height: 12px; text-align: center; font-weight: 600; }
.ext em.bl { background: #3b82f6; }

/* bookmarks */
.marks { display: grid; grid-template-columns: 67px 99px 126px 86px 101px 150px 113px 113px 112px 140px 1fr; height: 33px; padding: 0 15px 4px 14px; flex: none; background: #2d2d2d; border-bottom: 1px solid #1c1c1c; color: #f0f0f0; font-size: 12px; letter-spacing: -.42px; align-items: center; }
.marks p { display: flex; align-items: center; gap: 8px; white-space: nowrap; }
.marks svg { width: 16px; height: 16px; }
.marks .oth { justify-self: end; border-left: 1px solid #555; padding-left: 10px; }

/* course page */
.page { flex: 1; display: flex; min-height: 0; background: #fff; }
.view { flex: 1; display: flex; flex-direction: column; min-width: 0; }
.top { height: 72px; flex: none; display: flex; background: #59abe2; border-bottom: 1px solid #d2d6da; }
.tl { width: 350px; display: flex; justify-content: space-between; padding: 27px 16px 0 15px; border-right: 1px solid #c3dcee; }
.nl { border-color: #59abe2; }
.hm { width: 18px; height: 18px; }
.gr { width: 20px; height: 26px; margin-top: -4px; }
.tr { flex: 1; display: flex; justify-content: flex-end; gap: 8px; padding: 14px 24px 0 0; color: #fff; font-size: 15.500px; font-weight: 700; letter-spacing: -.45px; }
.tr span { height: 44px; border: 1px solid #d9ecf9; border-radius: 6px; display: flex; align-items: center; justify-content: center; gap: 13px; white-space: nowrap; }
.tr svg { width: 8px; height: 12px; }
.b1 { width: 199px; }
.b2 { width: 213px; }
.tr.off .b1 { color: #66a4cf; border-color: #66a9d6; }
.tr.off .b2 { color: #86c0e8; background: #6aabd9; border-color: #6aabd9; }
.cols { flex: 1; display: flex; min-height: 0; overflow: hidden; }
.side { width: 350px; display: flex; flex-direction: column; border-right: 1px solid #ccc; box-shadow: 2px 0 16px rgba(0,0,0,.13); position: relative; z-index: 1; background: #fff; }
.prog { height: 45px; flex: none; background: #f0f0f0; border-bottom: 1px solid #d2d2d2; display: flex; justify-content: center; align-items: center; position: relative; font-size: 13px; letter-spacing: -.5px; color: #222; }
.prog > span { position: relative; top: -3px; }
.prog b { font-size: 19.500px; margin-right: 2px; }
.ghost { position: absolute; inset: 0 0 10px 16px; display: flex; align-items: center; opacity: .04; font-size: 14px; white-space: nowrap; }
.ghost svg { width: 20px; height: 18px; margin-right: 29px; }
.ghost svg + svg { margin-right: 15px; }
.sb { flex: 1; display: flex; min-height: 0; }
.list { flex: 1; overflow: hidden; }
.list h3 { height: 88px; padding: 29px 44px 11px 16px; font-size: 16px; line-height: 24px; font-weight: 600; color: #1d1f23; letter-spacing: -.29px; }
.up .row:first-child { margin-top: -20px; }
.row { height: 53px; background: #fafafa; border-top: 1px solid #eef5fa; display: flex; align-items: center; padding-left: 16px; font-size: 14px; font-weight: 300; color: #222; letter-spacing: -.3px; white-space: nowrap; }
.row.cur { background: #fff; }
.row .st { width: 20px; height: 20px; }
.row .ty { width: 20px; height: 18px; margin: 0 14px 0 29px; color: #111; }
.scr { width: 17px; flex: none; background: #f1f1f1; display: flex; flex-direction: column; align-items: center; position: relative; }
.scr::before, .scr::after { content: ""; position: absolute; left: 5px; border: 4px solid transparent; }
.scr::before { top: 2px; border-bottom-color: #505050; }
.scr::after { bottom: 2px; border-top-color: #505050; }
.scr i { width: 13px; background: #c1c1c1; }
.s-side i { margin-top: 324px; height: 126px; }
.s-side::before { display: none; }
.s-side2 i { margin-top: 410px; height: 197px; }
.s-side2::before { display: none; }
.s-q i { margin-top: 171px; height: 348px; }
.s-q2 i { margin-top: 130px; height: 328px; }
.s-art i { margin-top: 157px; height: 26px; }
.s-page i { margin-top: 18px; flex: 1; margin-bottom: 17px; }
.hs { height: 17px; flex: none; background: #f0f0f0; position: relative; }
.hs i { position: absolute; right: 0; top: 0; width: 17px; height: 17px; background: #dcdcdc; }
.hs::before, .hs::after { content: ""; position: absolute; top: 5px; border: 4px solid transparent; }
.hs::before { left: 1px; border-right-color: #a3a3a3; }
.hs::after { right: 19px; border-left-color: #a3a3a3; }

/* quiz */
.body { flex: 1; overflow: hidden; }
.card { width: 902px; margin-left: 40px; height: 536px; border: 1px solid #d5d8dc; border-top: 0; border-radius: 0 0 6px 6px; overflow: hidden; }
.q-in { border-bottom: 0; }
.quiz { width: 480px; margin-left: 210px; }
.inc { color: #e74c3c; font-size: 16px; line-height: 22px; letter-spacing: -.6px; padding-top: 2px; margin-bottom: 1px; }
.qt { font-size: 24px; font-weight: 400; line-height: 30px; margin-top: -7px; text-align: center; color: #333; letter-spacing: -.4px; }
.q-in .inc { padding-top: 33px; }
.opt { position: relative; border: 1px solid #ececec; border-radius: 5px; margin-bottom: 10px; padding: 10px 0; line-height: 24px; font-size: 16px; letter-spacing: -.4px; text-align: center; color: #858585; white-space: nowrap; }
.opt.bad { background: #e1e2e8; border-color: #e74c3c; color: #222; }
.opt.ok { border-color: #2ecc71; }
.opt svg { position: absolute; right: -31px; bottom: 14px; width: 12px; height: 12px; }
.nav { display: flex; justify-content: space-between; margin-top: 16px; }
.nav span { height: 32px; line-height: 31px; border-radius: 4px; background: #58abe1; color: #fff; font-weight: 700; font-size: 15px; letter-spacing: -.4px; width: 91px; text-align: center; }
.nav span + span { width: 119px; }

/* lesson article */
.art { flex: 1; min-width: 0; padding: 0 40px; overflow: hidden; color: #333; font-size: 16px; line-height: 30px; letter-spacing: -.05px; }
.art p { white-space: nowrap; }
.art .just { text-align-last: justify; letter-spacing: -.4px; height: 30px; }
.code { height: 20px; margin-bottom: 18px; background: #f5f5f5; border: 1px solid #ccc; border-top: 0; border-radius: 0 0 4px 4px; line-height: 4px; padding-left: 12px; font-size: 14px; color: #888; overflow: hidden; }
.art h2 { font-size: 26px; font-weight: 600; color: #222; line-height: 34px; margin: 22px 0 7px; letter-spacing: -.6px; }
.art .gap { margin-top: 22px; letter-spacing: -.3px; }
.art h2.h2b { margin: 22px 0 5px; }
figure { width: 470px; margin: 23px auto 22px; text-align: center; }
figure strong { display: block; text-align: left; margin-left: 9px; font-family: Lato, sans-serif; font-weight: 900; font-size: 38px; line-height: 40px; letter-spacing: -1.500px; color: #5333ed; }
.fl { display: flex; gap: 19px; margin-top: 27px; }
.fl div { width: 319px; height: 143px; background: #5333ed; color: #dc9a78; font-size: 20px; line-height: 114px; letter-spacing: -.3px; }
.fl div + div { width: 132px; line-height: 108px; }
figcaption { line-height: 30px; }

/* Windows taskbar */
.tbar { height: 40px; flex: none; margin-top: auto; background: #101010; display: flex; color: #fff; }
.tbar > i { width: 49px; height: 40px; display: flex; align-items: center; justify-content: center; position: relative; }
.tbar > i.n { width: 48px; }
.tbar > i.g { width: 2px; }
.tbar svg { width: 23px; height: 23px; }
.tbar svg.s16 { width: 16px; height: 16px; }
.tbar .run::after, .tbar .act::after { content: ""; position: absolute; left: 4px; right: 5px; bottom: 0; height: 2px; background: linear-gradient(90deg, #b3b3b3 80%, #8c8c8c 80%); }
.tbar .act { background: #363636; }
.tbar .act::after { left: 0; right: 4px; }
.tbar em { position: absolute; right: 3px; bottom: 4px; width: 18px; height: 18px; border-radius: 50%; border: 1px solid #aaa; background: #2b2b2b; font-size: 11px; line-height: 16px; text-align: center; letter-spacing: -.5px; font-weight: 600; }
.tray { margin-left: auto; display: flex; align-items: center; font-size: 12px; line-height: 17px; letter-spacing: -.45px; text-align: center; padding-right: 4px; }
.tbar .tray svg { width: 16px; height: 16px; margin: 0 8px; }
.tbar .tray svg.s20 { width: 20px; height: 20px; margin-right: 18px; }
.tbar .tray svg.s12 { width: 12px; height: 12px; margin-right: 9px; }
.tbar .tray svg.kb { width: 22px; height: 14px; }
.lang { width: 40px; margin-left: 2px; }
.clk { width: 64px; }
.nt { width: 52px; height: 40px; border-right: 1px solid #666; position: relative; display: flex; align-items: center; }
.tbar .tray .nt svg { margin: 0 0 2px 16px; }
.tray .nt em { right: 10px; bottom: 3px; }
.solo { padding-right: 2px; }

/* photo viewer */
.app { background: #222; color: #fff; font-size: 12px; letter-spacing: -.35px; }
.atitle { height: 32px; background: #1f1f1f; display: flex; align-items: center; justify-content: space-between; padding: 2px 18px 0 12px; }
.awc { display: flex; gap: 36px; color: #888; }
.awc svg { width: 10px; height: 10px; }
.atool { height: 48px; display: grid; grid-template-columns: 142px 133px 1fr auto; align-items: center; font-size: 12px; }
.atool span { display: flex; align-items: center; white-space: nowrap; }
.atool svg { width: 16px; height: 16px; }
.all { height: 48px; background: #8f8f8f; padding-left: 12px; gap: 8px; }
.add { padding-left: 13px; gap: 8px; }
.mid { display: flex; gap: 34.500px; padding-left: 416px; }
.end { display: flex; align-items: center; padding-right: 20px; letter-spacing: -.45px; }
.e1 { gap: 8px; width: 131px; }
.e2 { gap: 8px; width: 123px; }
.atool svg.dn { width: 9px; height: 9px; transform: rotate(180deg); opacity: .7; }
.more { gap: 3px; margin-left: 31px; }
.more b { width: 2px; height: 2px; background: #fff; }
.stage { flex: 1; padding: 141px 0 0 32px; position: relative; }
.photo { width: 1536px; height: 466px; overflow: hidden; }
.shrink { transform: scale(.51787); transform-origin: 0 0; letter-spacing: normal; }
.exp { position: absolute; right: 15px; bottom: 15px; width: 18px; height: 18px; }
```
